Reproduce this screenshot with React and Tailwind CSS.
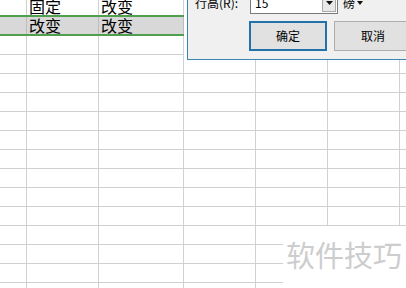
import React from "react";

const FONT = { fontFamily: '"Noto Sans CJK SC", "Noto Sans", sans-serif' };

function Row({ h, gray, a, b, c, last }) {
  const base = "h-full border-r flex items-end pl-[2px] pb-[1px] text-[16px] leading-[16px] text-black";
  const line = gray ? "border-[#bdbdbd]" : "border-[#d0d0d0]";
  const bg = gray ? "bg-[#d8d8d8]" : "bg-white";
  return (
    <div className={`flex shrink-0 ${h}`}>
      <div className={`w-[27px] ${base} ${line} ${bg}`}>{a}</div>
      <div className={`w-[72px] ${base} ${line} ${bg}`}>{b}</div>
      <div className={`w-[85px] ${base} ${line} ${bg}`}>{c}</div>
      <div className="w-[72px] h-full border-r border-[#d0d0d0]" />
      <div className="w-[72px] h-full border-r border-[#d0d0d0]" />
      <div className="w-[72px] h-full border-r border-[#d0d0d0]" />
      <div className="flex-1 h-full" />
    </div>
  );
}

function GridRow() {
  return (
    <div className="flex shrink-0 h-[19px] border-b border-[#d0d0d0]">
      <div className="w-[27px] h-full border-r border-[#d0d0d0]" />
      <div className="w-[72px] h-full border-r border-[#d0d0d0]" />
      <div className="w-[85px] h-full border-r border-[#d0d0d0]" />
      <div className="w-[72px] h-full border-r border-[#d0d0d0]" />
      <div className="w-[72px] h-full border-r border-[#d0d0d0]" />
      <div className="w-[72px] h-full border-r border-[#d0d0d0]" />
      <div className="flex-1 h-full" />
    </div>
  );
}

export default function App() {
  const rows = Array.from({ length: 14 });
  return (
    <div className="relative w-[406px] h-[288px] overflow-hidden bg-white" style={FONT}>
      <div className="flex flex-col">
        <Row h="h-[15px]" b="固定" c="改变" />
        <div className="h-[2px] w-[184px] bg-[#4f9f4f] shrink-0" />
        <Row h="h-[17px]" gray b="改变" c="改变" />
        <div className="h-[2px] w-[184px] bg-[#4f9f4f] shrink-0" />
        {rows.map((_, i) => (
          <GridRow key={i} />
        ))}
      </div>

      {/* Dialog */}
      <div className="absolute left-[184px] top-0 w-[222px] h-[60px] bg-white pl-[3px]">
        <div className="h-full border-l border-b border-[#3a87b5] bg-[#f0f0f0] overflow-hidden">
          <div className="flex flex-col -mt-[9px] text-[12px] leading-[16px] text-black">
            <div className="flex items-center h-[23px]">
              <div className="ml-[7px] w-[55px] whitespace-nowrap">行高(R):</div>
              <div className="w-[88px] h-[23px] border border-[#7a7a7a] bg-white flex">
                <div className="flex-1 pl-[4px] flex items-center">15</div>
                <div className="w-[14px] m-[1px] border border-[#a8a8a8] bg-[#e8e8e8] flex items-center justify-center">
                  <svg width="7" height="4" viewBox="0 0 7 4">
                    <path d="M0 0 L7 0 L3.5 4 Z" fill="#111" />
                  </svg>
                </div>
              </div>
              <div className="ml-[5px] flex items-center gap-[2px] whitespace-nowrap">
                <span>磅</span>
                <svg width="6" height="4" viewBox="0 0 6 4">
                  <path d="M0 0 L6 0 L3 4 Z" fill="#111" />
                </svg>
              </div>
            </div>
            <div className="flex mt-[7px] ml-[61px] gap-[7px]">
              <div className="w-[78px] h-[30px] shrink-0 border-2 border-[#2470a8] bg-[#e1e1e1] flex items-center justify-center">
                确定
              </div>
              <div className="w-[78px] h-[30px] shrink-0 border border-[#adadad] bg-[#e1e1e1] flex items-center justify-center">
                取消
              </div>
            </div>
          </div>
        </div>
      </div>

      {/* Watermark */}
      <div className="absolute left-[283px] top-[226px] w-[123px] h-[62px] bg-white pl-[3px] pt-[14px]">
        <div className="text-[29px] leading-[29px] text-[#cdcdcd] whitespace-nowrap">软件技巧</div>
      </div>
    </div>
  );
}
